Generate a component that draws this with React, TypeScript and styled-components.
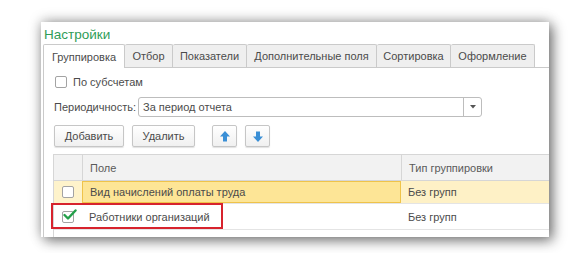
import React from "react";
import styled, { createGlobalStyle } from "styled-components";

const GlobalStyle = createGlobalStyle`
  html, body { margin: 0; padding: 0; background: #ffffff; }
  body { font-family: "Liberation Sans", Arial, sans-serif; }
`;

const Page = styled.div`
  padding: 22px 0 0 41px;
  width: 584px;
  height: 253px;
  box-sizing: border-box;
  overflow: hidden;
`;

const Card = styled.div`
  width: 508px;
  height: 215px;
  background: #ffffff;
  box-shadow: 4px 4px 12px rgba(0, 0, 0, 0.45), 0 -1px 12px rgba(0, 0, 0, 0.28);
  overflow: hidden;
  display: flex;
  flex-direction: column;
`;

const Title = styled.div`
  color: #2f9d57;
  font-size: 13.5px;
  line-height: 16px;
  padding: 5px 0 0 3px;
  height: 17px;
`;

const TabStrip = styled.div`
  display: flex;
  margin-left: 2px;
  height: 23px;
  border-bottom: 1px solid #cacaca;
  flex-shrink: 0;
`;

const Tab = styled.div<{ $w: number; $active?: boolean }>`
  width: ${(p) => p.$w}px;
  box-sizing: border-box;
  height: ${(p) => (p.$active ? 24 : 23)}px;
  border: 1px solid #cacaca;
  border-left: ${(p) => (p.$active ? "1px solid #cacaca" : "none")};
  border-bottom: none;
  border-radius: 2px 2px 0 0;
  background: ${(p) => (p.$active ? "#ffffff" : "#efefef")};
  color: #4b4b4b;
  font-size: 11px;
  display: flex;
  align-items: center;
  justify-content: center;
  z-index: ${(p) => (p.$active ? 1 : 0)};
`;

const Panel = styled.div`
  margin-left: 2px;
  border-left: 1px solid #cacaca;
  flex: 1;
  padding: 8px 0 0 10px;
  display: flex;
  flex-direction: column;
  color: #4b4b4b;
  font-size: 11px;
`;

const CheckRow = styled.div`
  display: flex;
  align-items: center;
  gap: 6px;
  height: 12px;
  margin-left: 1px;
`;

const Box = styled.div`
  width: 12px;
  height: 12px;
  box-sizing: border-box;
  border: 1px solid #a3a3a3;
  border-radius: 2px;
  background: #ffffff;
  position: relative;
  flex-shrink: 0;
`;

const PeriodRow = styled.div`
  display: flex;
  align-items: center;
  margin-top: 9px;
  height: 20px;
`;

const Label = styled.span`
  width: 84px;
  flex-shrink: 0;
`;

const Select = styled.div`
  width: 344px;
  height: 20px;
  box-sizing: border-box;
  border: 1px solid #bdbdbd;
  border-radius: 3px;
  display: flex;
  align-items: center;
  background: #fff;
`;

const SelectValue = styled.div`
  flex: 1;
  padding-left: 4px;
`;

const SelectButton = styled.div`
  width: 17px;
  height: 100%;
  border-left: 1px solid #bdbdbd;
  display: flex;
  align-items: center;
  justify-content: center;
`;

const Toolbar = styled.div`
  display: flex;
  align-items: center;
  margin-top: 8px;
  height: 22px;
`;

const Button = styled.div<{ $w: number; $gap: number }>`
  width: ${(p) => p.$w}px;
  margin-left: ${(p) => p.$gap}px;
  height: 22px;
  box-sizing: border-box;
  border: 1px solid #c6c6c6;
  border-radius: 2px;
  background: linear-gradient(#ffffff, #f0f0f0);
  box-shadow: 0 1px 1px rgba(0, 0, 0, 0.12);
  display: flex;
  align-items: center;
  justify-content: center;
  color: #4b4b4b;
  font-size: 11px;
`;

const Table = styled.div`
  margin-top: 7px;
  margin-left: -1px;
  border-left: 1px solid #d6d6d6;
  border-top: 1px solid #d6d6d6;
  flex: 1;
  display: flex;
  flex-direction: column;
`;

const Row = styled.div<{ $h: number; $header?: boolean }>`
  display: grid;
  grid-template-columns: 28px 319px 1fr;
  height: ${(p) => p.$h}px;
  flex-shrink: 0;
  border-bottom: 1px solid ${(p) => (p.$header ? "#d6d6d6" : "#e4e4e4")};
  background: ${(p) => (p.$header ? "#f2f2f2" : "#ffffff")};
  color: ${(p) => (p.$header ? "#5a5a5a" : "#4b4b4b")};
  position: relative;
`;

const Cell = styled.div<{ $bg?: string; $sel?: boolean; $sep?: boolean }>`
  display: flex;
  align-items: center;
  padding-left: 7px;
  box-sizing: border-box;
  background: ${(p) => p.$bg || "transparent"};
  border: ${(p) => (p.$sel ? "1px solid #efc34a" : "none")};
  border-left: ${(p) => (p.$sep ? "1px solid #d6d6d6" : p.$sel ? "1px solid #efc34a" : "none")};
  white-space: nowrap;
`;

const BoxCell = styled(Cell)`
  padding-left: 8px;
`;

const Highlight = styled.div`
  position: absolute;
  left: -3px;
  top: -1px;
  width: 172px;
  height: 26px;
  box-sizing: border-box;
  border: 2px solid #d7232d;
  pointer-events: none;
`;

const Arrow = ({ down }: { down?: boolean }) => (
  <svg width="10" height="11" viewBox="0 0 10 11" style={{ transform: down ? "rotate(180deg)" : undefined }}>
    <path d="M5 0 L10 5.5 L7 5.5 L7 10.5 L3 10.5 L3 5.5 L0 5.5 Z" fill="#3a8fd6" />
  </svg>
);

const Caret = () => (
  <svg width="6" height="4" viewBox="0 0 6 4">
    <path d="M0 0 L6 0 L3 3.5 Z" fill="#555" />
  </svg>
);

const Check = () => (
  <svg width="14" height="12" viewBox="0 0 14 12" style={{ position: "absolute", left: 0, top: -3 }}>
    <path d="M1.5 6 L5 9.5 L12.5 1.5" fill="none" stroke="#23a04a" strokeWidth="2.4" strokeLinecap="round" strokeLinejoin="round" />
  </svg>
);

const tabs = [
  { label: "Группировка", w: 82, active: true },
  { label: "Отбор", w: 48 },
  { label: "Показатели", w: 74 },
  { label: "Дополнительные поля", w: 130 },
  { label: "Сортировка", w: 74 },
  { label: "Оформление", w: 84 },
];

export default function App() {
  return (
    <>
      <GlobalStyle />
      <Page>
        <Card>
          <Title>Настройки</Title>
          <TabStrip>
            {tabs.map((t) => (
              <Tab key={t.label} $w={t.w} $active={t.active}>
                {t.label}
              </Tab>
            ))}
          </TabStrip>
          <Panel>
            <CheckRow>
              <Box />
              <span>По субсчетам</span>
            </CheckRow>
            <PeriodRow>
              <Label>Периодичность:</Label>
              <Select>
                <SelectValue>За период отчета</SelectValue>
                <SelectButton>
                  <Caret />
                </SelectButton>
              </Select>
            </PeriodRow>
            <Toolbar>
              <Button $w={70} $gap={0}>Добавить</Button>
              <Button $w={63} $gap={8}>Удалить</Button>
              <Button $w={25} $gap={17}>
                <Arrow />
              </Button>
              <Button $w={25} $gap={8}>
                <Arrow down />
              </Button>
            </Toolbar>
            <Table>
              <Row $h={25} $header>
                <Cell />
                <Cell $sep>Поле</Cell>
                <Cell $sep>Тип группировки</Cell>
              </Row>
              <Row $h={22}>
                <BoxCell $bg="#fef3cb">
                  <Box />
                </BoxCell>
                <Cell $bg="#fde596" $sel>
                  Вид начислений оплаты труда
                </Cell>
                <Cell $bg="#fef1c6">Без групп</Cell>
              </Row>
              <Row $h={25}>
                <BoxCell>
                  <Box>
                    <Check />
                  </Box>
                </BoxCell>
                <Cell>Работники организаций</Cell>
                <Cell>Без групп</Cell>
                <Highlight />
              </Row>
            </Table>
          </Panel>
        </Card>
      </Page>
    </>
  );
}
